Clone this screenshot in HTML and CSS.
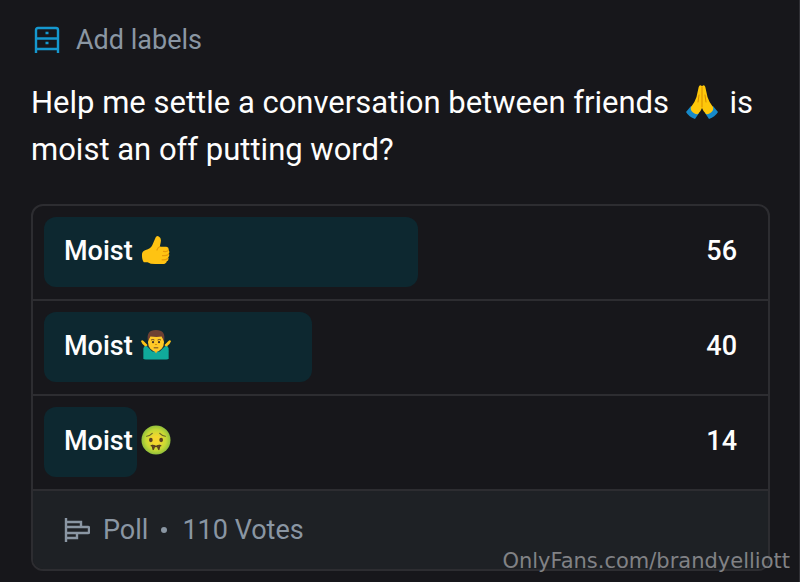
FILE: index.html
```
<!DOCTYPE html>
<html lang="en">
<head>
<meta charset="utf-8">
<meta name="viewport" content="width=device-width, initial-scale=1">
<title>Poll</title>
<link rel="stylesheet" href="styles.css">
</head>
<body>
<main class="post">
  <button class="labels" type="button">
    <svg class="labels-icon" viewBox="0 0 26 28" fill="none" stroke="currentColor" stroke-width="2.4" aria-hidden="true">
      <path d="M2 27V4Q2 2 4 2H22Q24 2 24 4V27M2 12.5H24M2 23H24"/>
      <path d="M11.500 7H14.500M11.500 17H14.500"/>
    </svg>
    <span>Add labels</span>
  </button>

  <p class="question">Help me settle a conversation between friends <span class="together"><svg class="emoji" viewBox="0 0 32 36" role="img" aria-label="Folded hands">
      <path fill="#1689c9" d="M5 22L0 28Q3 33 9 35L13 29ZM27 22L32 28Q29 33 23 35L19 29Z"/>
      <path fill="#ffc80a" d="M15.8 2Q13.6 0 12.7 3L10.5 13Q9 18 5 23Q4 26 7 28.500Q10 31 12 30Q15 27 16 24Q17 27 20 30Q22 31 25 28.500Q28 26 27 23Q23 18 21.500 13L19.300 3Q18.400 0 16.200 2Z"/>
      <path fill="none" stroke="#d98e00" stroke-width="1" stroke-linecap="round" d="M16 3V23M13 11L12 18M19 11L20 18"/>
    </svg> is</span> <span>moist an off putting word?</span></p>

  <section class="poll" aria-label="Poll results">
    <ul class="options">
      <li class="option">
        <span class="bar" style="width:50.9%"></span>
        <span class="answer"><span>Moist <svg class="emoji" viewBox="0 0 32 32" role="img" aria-label="Thumbs up">
          <path fill="#ffc312" d="M1 21Q1 17 5 16Q10 15 12 11L15 4Q16 0 19 1.500Q22 3 21 8L20 12.500H27Q30 13 29.500 16Q31 18 29.500 20Q31 22 29 24Q30 27 27.500 28Q27 31 23 31H15Q10 31 7 29H3Q1 27 1 21Z"/>
          <path fill="none" stroke="#e69b08" stroke-width="1.300" stroke-linecap="round" d="M29 16.500Q28 18 24 17.500M29.500 20.500Q27 22.500 23 22M28.500 25Q26 27 22.500 26.500M20 12.500Q18 13 17 16"/>
        </svg></span><span>56</span></span>
      </li>
      <li class="option">
        <span class="bar" style="width:36.4%"></span>
        <span class="answer"><span>Moist <svg class="emoji" viewBox="0 0 32 32" role="img" aria-label="Man shrugging">
          <path fill="#ffc516" d="M0 12Q1 10 3 12L7 16V23H3L4 17Q1 15 0 12ZM32 12Q31 10 29 12L25 16V23H29L28 17Q31 15 32 12Z"/>
          <path fill="#10aa9b" d="M2.500 30V20Q3 17 6 17H26Q29 17 29.500 20V30Q29 31.500 27 31.500H5Q3 31.500 2.500 30Z"/>
          <path fill="#263238" d="M6 17L9 14L14 23H12ZM26 17L23 14L18 23H20Z"/>
          <path fill="#f5a91b" d="M12 19H20L16 25Z"/>
          <ellipse cx="16" cy="13" rx="8.500" ry="10" fill="#ffca28"/>
          <path fill="#6d4033" d="M7.500 12Q5 0 16 0Q27 0 24.500 12Q23 9 22 7Q17 8 10 7Q9 9 7.500 12Z"/>
          <path fill="none" stroke="#634027" stroke-linecap="round" d="M11 10.500Q12.500 9.500 14 10.500M18 10.500Q19.500 9.500 21 10.500M14 19H18"/>
          <circle cx="12.800" cy="13" r="1.200" fill="#443328"/><circle cx="19.200" cy="13" r="1.200" fill="#443328"/>
          <path d="M14.800 15.500H17.200" stroke="#d58a08"/>
        </svg></span><span>40</span></span>
      </li>
      <li class="option">
        <span class="bar" style="width:12.7%"></span>
        <span class="answer"><span>Moist <svg class="emoji" viewBox="0 0 32 32" role="img" aria-label="Nauseated face">
          <defs><radialGradient id="sick"><stop offset=".25" stop-color="#f5d72e"/><stop offset=".7" stop-color="#c5d935"/><stop offset="1" stop-color="#91bf3c"/></radialGradient></defs>
          <circle cx="16" cy="16" r="15.500" fill="url(#sick)"/>
          <path fill="none" stroke="#66642a" stroke-width="1.300" stroke-linecap="round" d="M6 12Q9 12 12 9M20 9Q23 12 26 12"/>
          <ellipse cx="10.500" cy="16" rx="2" ry="2.300" fill="#5a4023"/><ellipse cx="21.500" cy="16" rx="2" ry="2.300" fill="#5a4023"/>
          <path fill="none" stroke="#59401f" stroke-width="1.600" stroke-linecap="round" stroke-linejoin="round" d="M11 22Q13.500 21.500 16 23Q18.500 21.500 21 22M12 22L13 26L14.500 22.500M20 22L19 26L17.500 22.500"/>
        </svg></span><span>14</span></span>
      </li>
    </ul>
    <footer class="summary">
      <svg class="poll-icon" viewBox="0 0 26 24" fill="none" stroke="currentColor" stroke-width="2.4" aria-hidden="true">
        <path d="M2 0V24M2 4H17V9M2 9H24Q25 9 25 10V14Q25 15 24 15H2M13 15V20H2"/>
      </svg>
      <span>Poll</span><span class="dot"></span><span>110 Votes</span>
    </footer>
  </section>
  <div class="watermark">OnlyFans.com/brandyelliott</div>
</main>
</body>
</html>
```
FILE: styles.css
```
* { box-sizing: border-box; }

body {
  margin: 0;
  background: #17171b;
  color: #fefefe;
  font-family: Roboto, "Liberation Sans", sans-serif;
}

.post {
  position: relative;
  min-height: 100vh;
  padding: 24px 29px 12px 31px;
  border-right: 1px solid #303035;
}

.labels {
  display: flex;
  align-items: center;
  gap: 16px;
  padding: 0 0 0 3px;
  border: 0;
  background: none;
  color: #8a96a3;
  font: inherit;
  font-size: 27px;
  line-height: 32px;
}

.labels-icon {
  width: 26px;
  height: 28px;
  color: #1598cf;
}

.question {
  margin: 23px 0 31px;
  font-size: 31px;
  line-height: 47px;
}

.together {
  white-space: nowrap;
}

.emoji {
  width: 30px;
  height: 30px;
  margin-left: 2px;
  vertical-align: -5px;
}

.question .emoji {
  width: 32px;
  height: 36px;
  margin: 0 4px 0 9px;
  vertical-align: -7px;
}

.poll {
  overflow: hidden;
  border: 2px solid #2d2d31;
  border-radius: 12px;
}

.options {
  margin: 0;
  padding: 0;
  list-style: none;
}

.option {
  display: grid;
  align-items: center;
  padding: 11px 0 12px;
  border-bottom: 2px solid #2d2d31;
}

.bar,
.answer {
  grid-area: 1 / 1;
}

.bar {
  height: 70px;
  margin-left: 11px;
  border-radius: 12px;
  background: #0d2830;
}

.answer {
  display: flex;
  justify-content: space-between;
  padding: 0 31px;
  font-size: 27px;
  font-weight: 500;
  line-height: 34px;
  padding-bottom: 3px;
}

.summary {
  display: flex;
  align-items: center;
  padding: 0 31px;
  background: #1e2125;
  color: #8a96a3;
  font-size: 27px;
  line-height: 78px;
}

.poll-icon {
  width: 26px;
  height: 24px;
  margin-right: 13px;
}

.dot {
  width: 6px;
  height: 6px;
  margin: 0 15px 0 13px;
  border-radius: 50%;
  background: currentColor;
}

.watermark {
  position: absolute;
  right: 9px;
  bottom: 8px;
  color: #818285;
  font-family: "DejaVu Sans", sans-serif;
  font-size: 21px;
  line-height: 28px;
}
```
